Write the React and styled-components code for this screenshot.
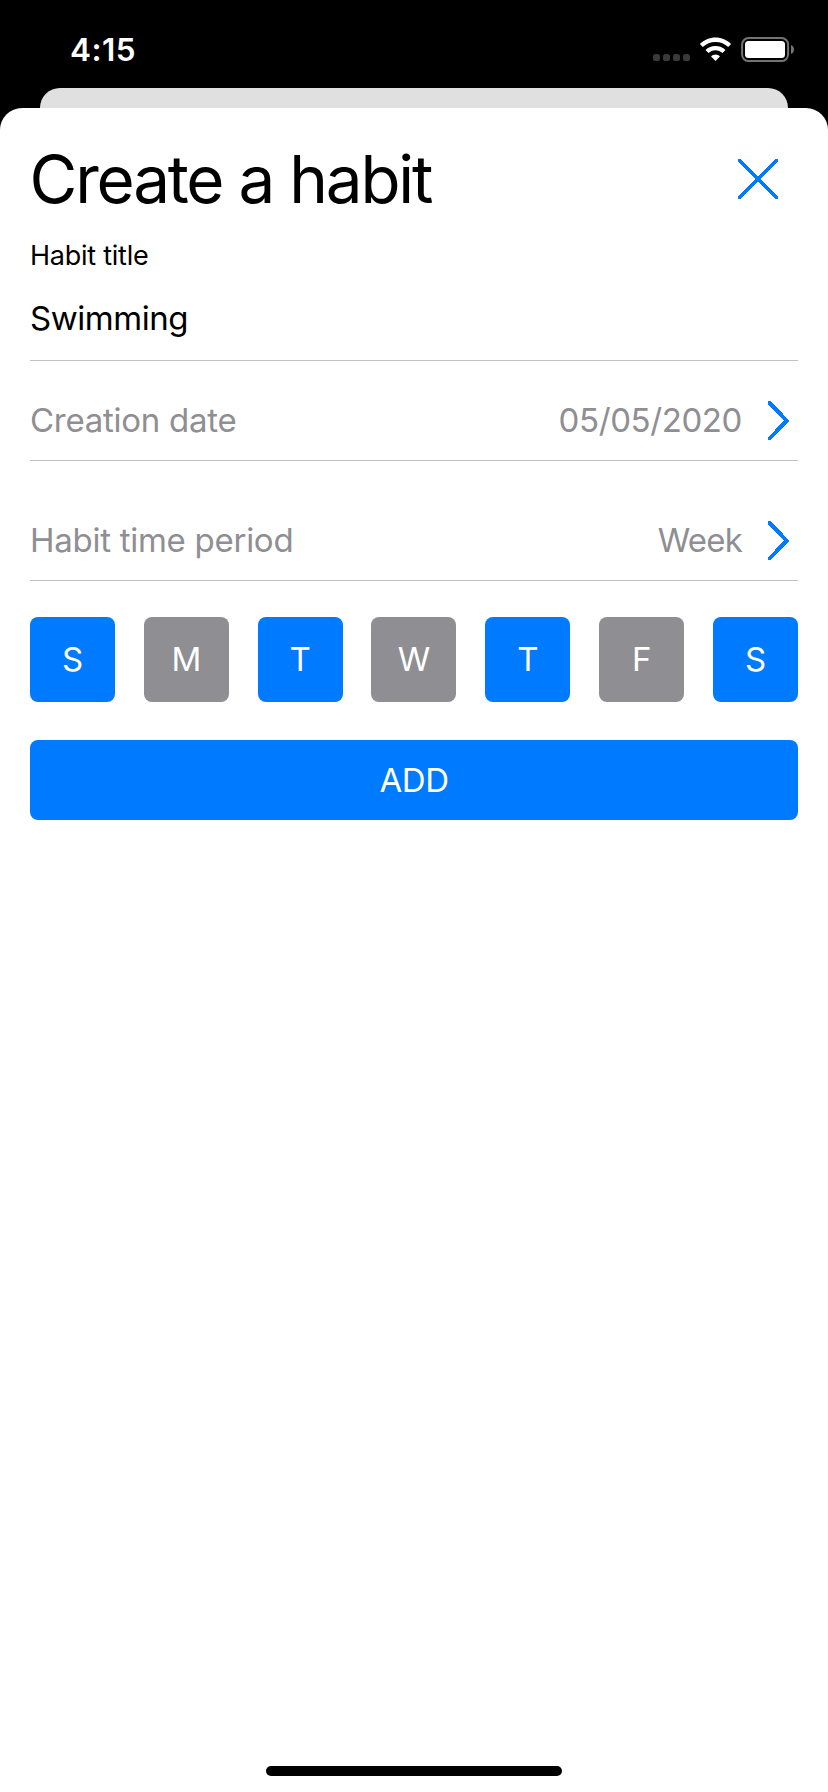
import React from "react";
import styled, { createGlobalStyle } from "styled-components";

const BLUE = "#007aff";
const GRAY = "#8e8e93";

const GlobalStyle = createGlobalStyle`
  * { box-sizing: border-box; }
  body {
    margin: 0;
    background: #000;
    font-family: Inter, Roboto, sans-serif;
  }
`;

const Screen = styled.div`
  display: flex;
  flex-direction: column;
  width: 828px;
  height: 1792px;
  background: #000;
  overflow: hidden;
`;

const StatusBar = styled.header`
  display: flex;
  align-items: flex-start;
  justify-content: space-between;
  height: 88px;
  padding: 30px 33px 0 70px;
`;

const Clock = styled.span`
  color: #fff;
  font-size: 31.5px;
  font-weight: 600;
  line-height: 40px;
  letter-spacing: 0.5px;
`;

const StatusIcons = styled.div`
  display: flex;
  height: 40px;
  padding-top: 7px;
`;

const CardBehind = styled.div`
  flex: none;
  height: 20px;
  margin: 0 40px;
  border-radius: 20px 20px 0 0;
  background: #e0e0e0;
`;

const Sheet = styled.main`
  flex: 1;
  display: flex;
  flex-direction: column;
  padding: 12px 30px 16px;
  border-radius: 22px 22px 0 0;
  background: #fff;
`;

const SheetHeader = styled.div`
  display: flex;
  align-items: center;
  justify-content: space-between;
  height: 118px;
  padding-right: 19px;
`;

const Title = styled.h1`
  margin: 0;
  padding-top: 2px;
  font-size: 65.5px;
  font-weight: 400;
  line-height: 80px;
  letter-spacing: -2.2px;
  text-indent: -0.5px;
  color: #000;
`;

const IconButton = styled.button`
  display: flex;
  padding: 0;
  border: 0;
  background: none;
`;

const Label = styled.label`
  padding-top: 1px;
  font-size: 27px;
  line-height: 33px;
  letter-spacing: -0.25px;
  color: #000;
`;

const Field = styled.div`
  display: flex;
  align-items: center;
  height: 89px;
  padding-top: 4px;
  border-bottom: 1px solid #c2c2c4;
  font-size: 33px;
  letter-spacing: -0.45px;
  color: #000;
`;

const PickerRow = styled.div`
  display: flex;
  align-items: center;
  height: 81px;
  margin-top: ${(p) => p.$gap}px;
  padding-right: 8px;
  border-bottom: 1px solid #c2c2c4;
  font-size: 33px;
  color: ${GRAY};
`;

const PickerLabel = styled.span`
  flex: 1;
  letter-spacing: -0.27px;
`;

const PickerValue = styled.span`
  margin-right: 25px;
  letter-spacing: ${(p) => p.$tracking}px;
`;

const Days = styled.div`
  display: flex;
  justify-content: space-between;
  margin-top: 36px;
`;

const Day = styled.button`
  width: 85px;
  height: 85px;
  padding: 0 0 2px;
  border: 0;
  border-radius: 8px;
  background: ${(p) => (p.$on ? BLUE : GRAY)};
  color: #fff;
  font: 400 33px/82px Inter, Roboto, sans-serif;
`;

const AddButton = styled.button`
  height: 80px;
  margin-top: 38px;
  padding: 0;
  border: 0;
  border-radius: 8px;
  background: ${BLUE};
  color: #fff;
  font: 400 33px/80px Inter, Roboto, sans-serif;
  letter-spacing: -0.5px;
`;

const HomeIndicator = styled.div`
  width: 296px;
  height: 10px;
  margin: auto auto 0;
  border-radius: 5px;
  background: #000;
`;

const StatusGlyphs = () => (
  <svg width="142" height="26" viewBox="0 0 142 26">
    {[0, 10, 20, 30].map((x) => (
      <rect key={x} x={x} y="17" width="7" height="7" rx="2.6" fill="#3a3a3a" />
    ))}
    <g transform="translate(46.5 0)" fill="#fff">
      <path d="M16 5.1 C20.9 5.1 25.4 7 28.7 10.1 L31.6 7.1 C27.5 3.1 22 .6 16 .6 S4.5 3.1 .4 7.1 L3.3 10.1 C6.6 7 11.1 5.1 16 5.1Z" />
      <path d="M16 13.2 C18.7 13.2 21.2 14.3 23 16 L26 13 C23.4 10.5 19.9 9 16 9 S8.6 10.5 6 13 L9 16 C10.8 14.3 13.3 13.2 16 13.2Z" />
      <path d="M16 24 L20.4 19.4 C19.2 18.2 17.7 17.5 16 17.5 S12.8 18.2 11.6 19.4Z" />
    </g>
    <rect x="89.1" y="1.1" width="46" height="23" rx="6.5" fill="none" stroke="#737373" strokeWidth="2" />
    <rect x="92" y="4" width="40" height="17" rx="3.5" fill="#fff" />
    <path d="M138 8 C142 9.5 142 15.5 138 17Z" fill="#737373" />
  </svg>
);

const CloseIcon = () => (
  <svg width="42" height="42" viewBox="0 0 42 42" shapeRendering="crispEdges">
    <path d="M2.5 2.5 L39.5 39.5 M39.5 2.5 L2.5 39.5" stroke={BLUE} strokeWidth="3.5" strokeLinecap="round" />
  </svg>
);

const Chevron = () => (
  <svg width="23" height="42" viewBox="0 0 23 42" shapeRendering="crispEdges">
    <path d="M2.8 4 L19.6 21.7 L2.8 39.4" fill="none" stroke={BLUE} strokeWidth="4" strokeLinecap="round" strokeLinejoin="miter" />
  </svg>
);

const WEEK = [
  ["S", true],
  ["M", false],
  ["T", true],
  ["W", false],
  ["T", true],
  ["F", false],
  ["S", true],
];

export default function App() {
  return (
    <Screen>
      <GlobalStyle />
      <StatusBar>
        <Clock>4:15</Clock>
        <StatusIcons>
          <StatusGlyphs />
        </StatusIcons>
      </StatusBar>
      <CardBehind />
      <Sheet>
        <SheetHeader>
          <Title>Create a habit</Title>
          <IconButton aria-label="Close">
            <CloseIcon />
          </IconButton>
        </SheetHeader>
        <Label>Habit title</Label>
        <Field>Swimming</Field>
        <PickerRow $gap={19}>
          <PickerLabel>Creation date</PickerLabel>
          <PickerValue $tracking={-0.4}>05/05/2020</PickerValue>
          <Chevron />
        </PickerRow>
        <PickerRow $gap={39}>
          <PickerLabel>Habit time period</PickerLabel>
          <PickerValue $tracking={-0.8}>Week</PickerValue>
          <Chevron />
        </PickerRow>
        <Days>
          {WEEK.map(([letter, on], i) => (
            <Day key={i} $on={on}>
              {letter}
            </Day>
          ))}
        </Days>
        <AddButton>ADD</AddButton>
        <HomeIndicator />
      </Sheet>
    </Screen>
  );
}
